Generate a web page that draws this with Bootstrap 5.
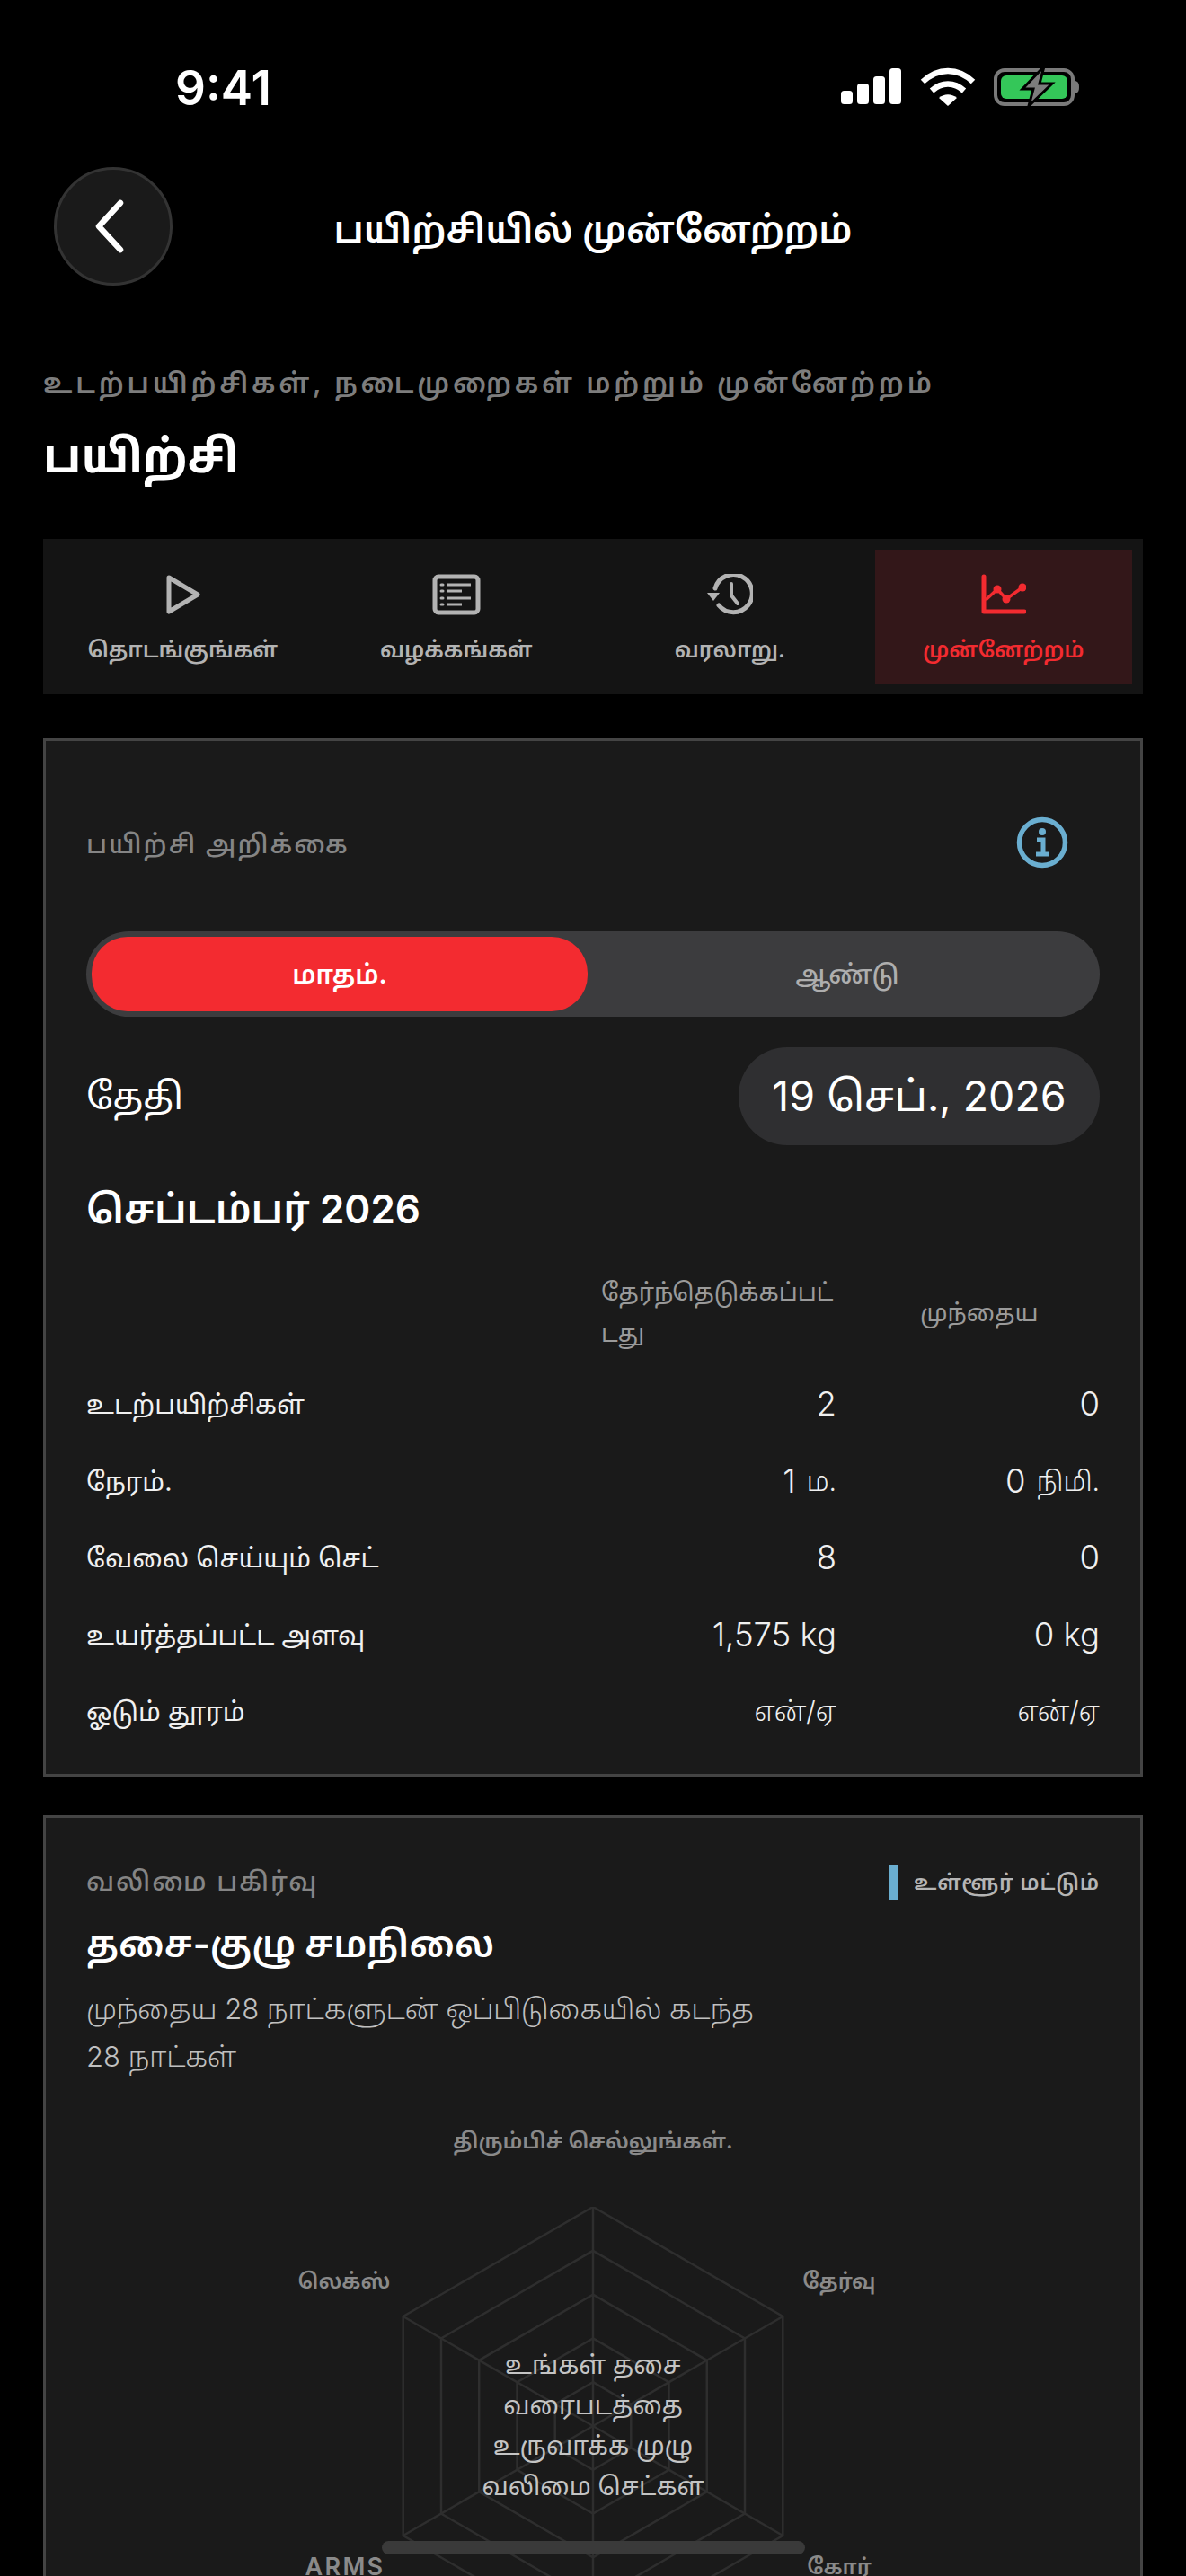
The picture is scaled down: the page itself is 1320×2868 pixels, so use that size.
<!DOCTYPE html>
<html lang="ta">
<head>
  <meta charset="UTF-8">
  <title>பயிற்சியில் முன்னேற்றம்</title>
  <link href="https://cdn.jsdelivr.net/npm/bootstrap@5.3.0/dist/css/bootstrap.min.css" rel="stylesheet">
  <style>
    html, body { height: 2868px; overflow: hidden; }
    body { background: #000; color: #fff; font-family: Inter, "Noto Sans", "Noto Sans Tamil", sans-serif; position: relative; }
    .status-row { height: 60px; margin-top: 68px; padding: 0 118px 0 195px; }
    .status-row svg { margin-bottom: 4px; }
    .clock { font-size: 53px; font-weight: 600; line-height: 60px; }
    .top-bar { height: 132px; margin-top: 58px; padding: 0 60px; }
    .back-btn { width: 132px; height: 132px; background: #1a1a1a; border: 3px solid #333; border-radius: 50%; }
    .back-btn svg { margin-right: 8px; }
    .top-title { font-size: 41px; font-weight: 600; line-height: 60px; padding-top: 6px; }
    .spacer-btn { width: 132px; }
    .page-head { padding: 84px 48px 0; }
    .eyebrow { font-size: 30px; font-weight: 600; letter-spacing: 3.8px; color: #7d7d7d; line-height: 48px; }
    .page-title { font-size: 51px; font-weight: 700; line-height: 84px; margin: 16px 0 0; }
    .tab-bar { margin: 50px 48px 0; height: 173px; padding: 12px; gap: 18px; background: #141414; }
    .tab-item { flex: 1 1 0; color: #b3b3b3; }
    .tab-item svg { display: block; margin: 27px auto 0; }
    .tab-item span { display: block; font-size: 24.5px; font-weight: 600; line-height: 40px; margin-top: 18px; }
    .tab-on { background: #331719; color: #f32b30; }
    .panel { margin: 49px 48px 0; background: #1a1a1a; border: 3px solid #444; padding: 0 45px; }
    .panel-one { height: 1156px; }
    .panel-two { margin-top: 43px; height: 900px; position: relative; }
    .panel-label { font-size: 29px; font-weight: 500; letter-spacing: 2px; color: #858585; line-height: 48px; }
    .info-ico { margin-right: 35px; margin-bottom: 4px; }
    .seg { height: 95px; margin-top: 66px; background: #3c3c3e; border-radius: 48px; padding: 6px; }
    .seg-on, .seg-off { border-radius: 40px; line-height: 84px; text-align: center; }
    .seg-on { flex: 0 0 552px; background: #f32b30; color: #fff; font-weight: 600; font-size: 29px; }
    .seg-off { flex: 1 1 0; padding-left: 14px; color: #aeaeae; font-weight: 500; font-size: 28.5px; }
    .date-row { margin-top: 34px; }
    .date-label { font-size: 41px; }
    .date-pill { background: #2f2f31; border-radius: 54px; height: 109px; width: 402px; font-size: 46.5px; font-weight: 400; }
    .month-title { font-size: 44px; font-weight: 600; line-height: 60px; margin: 41px 0 0; }
    .stat-grid { display: grid; grid-template-columns: 573px 262px 293px; margin-top: 27px; }
    .stat-head { font-size: 27px; color: #9a9a9a; line-height: 46px; white-space: nowrap; min-height: 118px; display: flex; align-items: center; }
    .stat-head-r { padding-left: 93px; }
    .stat-cell { height: 85.5px; display: flex; align-items: center; font-size: 29px; color: #f0f0f0; }
    .stat-num { justify-content: flex-end; font-size: 36.5px; font-weight: 300; }
    .stat-unit { font-size: 30px; margin-left: 12px; }
    .stat-na { font-size: 30px; }
    .tag-local { border-left: 9px solid #6aaed0; padding-left: 18px; height: 39px; font-size: 23.5px; font-weight: 600; letter-spacing: 0.8px; color: #b5b5b5; line-height: 39px; }
    .sec-title { font-size: 41px; font-weight: 600; line-height: 60px; margin: 15px 0 0; }
    .sec-desc { font-size: 31px; font-weight: 300; color: #c0c0c0; line-height: 53px; width: 780px; margin: 16px 0 0; }
    .radar-box { position: relative; height: 620px; margin-top: 33px; }
    .radar-box svg { position: absolute; left: 0; top: 108px; }
    .radar-lbl { position: absolute; transform: translate(-50%, -50%); font-size: 24px; font-weight: 600; color: #8a8a8a; white-space: nowrap; }
    .radar-lbl-en { font-size: 27px; letter-spacing: 2.3px; line-height: 20px; }
    .radar-note { position: absolute; left: 50%; top: 262px; transform: translateX(-50%); width: 300px; text-align: center; font-size: 28px; line-height: 45px; color: #c4c4c4; }
    .home-bar { position: absolute; left: 425px; top: 2829px; width: 471px; height: 15px; border-radius: 8px; background: #3a3a3a; }
  </style>
</head>
<body>

  <div class="status-row d-flex justify-content-between align-items-center">
    <div class="clock">9:41</div>
    <svg width="268" height="44" viewBox="0 0 268 44">
      <g fill="#fff">
        <rect x="2" y="27" width="13" height="15" rx="3.5"/>
        <rect x="20" y="19" width="13" height="23" rx="3.5"/>
        <rect x="38" y="11" width="13" height="31" rx="3.5"/>
        <rect x="56" y="2" width="13" height="40" rx="3.5"/>
      </g>
      <g fill="none" stroke="#fff" stroke-width="6.5">
        <path d="M93 17 C 110 1, 132 1, 149 17"/>
        <path d="M103 27 C 114 17, 128 17, 139 27"/>
      </g>
      <path d="M111 35 C 117 30, 125 30, 131 35 L121 44 Z" fill="#fff"/>
      <rect x="174" y="4" width="86" height="38" rx="10" fill="none" stroke="#7a7a7a" stroke-width="4"/>
      <rect x="180" y="10" width="74" height="26" rx="6" fill="#34c759"/>
      <path d="M263 16 c3 1 4 3 4 7 s-1 6 -4 7 z" fill="#7a7a7a"/>
      <path d="M228 0 L204 25 H216 L211 44 L237 19 H223 Z" fill="#7d7d7d" stroke="#000" stroke-width="3"/>
    </svg>
  </div>

  <div class="top-bar d-flex align-items-center">
    <div class="back-btn d-flex align-items-center justify-content-center flex-shrink-0">
      <svg width="40" height="60" viewBox="0 0 40 60"><path d="M32 4 L8 30 L32 56" fill="none" stroke="#fff" stroke-width="6.5" stroke-linecap="round" stroke-linejoin="round"/></svg>
    </div>
    <div class="top-title flex-grow-1 text-center">பயிற்சியில் முன்னேற்றம்</div>
    <div class="spacer-btn flex-shrink-0"></div>
  </div>

  <div class="page-head">
    <div class="eyebrow">உடற்பயிற்சிகள், நடைமுறைகள் மற்றும் முன்னேற்றம்</div>
    <h1 class="page-title">பயிற்சி</h1>
  </div>

  <div class="tab-bar d-flex">
    <div class="tab-item text-center">
      <svg width="48" height="46" viewBox="0 0 48 46"><path d="M9 4 L41 23 L9 42 Z" fill="none" stroke="currentColor" stroke-width="5" stroke-linejoin="round"/></svg>
      <span>தொடங்குங்கள்</span>
    </div>
    <div class="tab-item text-center">
      <svg width="54" height="46" viewBox="0 0 54 46">
        <rect x="3" y="3" width="48" height="40" rx="4" fill="none" stroke="currentColor" stroke-width="5"/>
        <path d="M17 12 H43 M17 19 H33 M17 27 H43 M17 34 H33" stroke="currentColor" stroke-width="3"/>
        <path d="M10 12 h2 M10 19 h2 M10 27 h2 M10 34 h2" stroke="currentColor" stroke-width="3" stroke-linecap="round"/>
      </svg>
      <span>வழக்கங்கள்</span>
    </div>
    <div class="tab-item text-center">
      <svg width="52" height="46" viewBox="0 0 52 46">
        <path d="M10 16 A 21 21 0 1 1 14 35" fill="none" stroke="currentColor" stroke-width="5" stroke-linecap="round"/>
        <path d="M1 21 L15 21 L8 30 Z" fill="currentColor"/>
        <path d="M28 11 V24 L35 33" fill="none" stroke="currentColor" stroke-width="4" stroke-linecap="round"/>
      </svg>
      <span>வரலாறு.</span>
    </div>
    <div class="tab-item tab-on text-center">
      <svg width="50" height="46" viewBox="0 0 50 46">
        <path d="M3 3 V42 H48" fill="none" stroke="currentColor" stroke-width="5" stroke-linecap="round" stroke-linejoin="round"/>
        <path d="M5 29 L18 17 L28 28 L46 15" fill="none" stroke="currentColor" stroke-width="3.5"/>
        <circle cx="18" cy="17" r="4.5" fill="currentColor"/><circle cx="28" cy="28" r="4.5" fill="currentColor"/><circle cx="46" cy="15" r="4.5" fill="currentColor"/>
      </svg>
      <span>முன்னேற்றம்</span>
    </div>
  </div>

  <div class="panel panel-one">
    <div class="d-flex justify-content-between align-items-center" style="padding-top:84px">
      <div class="panel-label">பயிற்சி அறிக்கை</div>
      <svg class="info-ico" width="58" height="58" viewBox="0 0 58 58">
        <circle cx="29" cy="29" r="25.5" fill="none" stroke="#6aaed0" stroke-width="5.5"/>
        <circle cx="29" cy="17" r="4" fill="#6aaed0"/>
        <path d="M23 26 H30 V41 M22 42 H37" fill="none" stroke="#6aaed0" stroke-width="5"/>
      </svg>
    </div>
    <div class="seg d-flex">
      <div class="seg-on">மாதம்.</div>
      <div class="seg-off">ஆண்டு</div>
    </div>
    <div class="date-row d-flex justify-content-between align-items-center">
      <div class="date-label">தேதி</div>
      <div class="date-pill d-flex align-items-center justify-content-center">19 செப்., 2026</div>
    </div>
    <h2 class="month-title">செப்டம்பர் 2026</h2>
    <div class="stat-grid">
      <div class="stat-head"></div>
      <div class="stat-head"><span>தேர்ந்தெடுக்கப்பட்<br>டது</span></div>
      <div class="stat-head stat-head-r">முந்தைய</div>

      <div class="stat-cell">உடற்பயிற்சிகள்</div>
      <div class="stat-cell stat-num">2</div>
      <div class="stat-cell stat-num">0</div>

      <div class="stat-cell">நேரம்.</div>
      <div class="stat-cell stat-num">1<span class="stat-unit">ம.</span></div>
      <div class="stat-cell stat-num">0<span class="stat-unit">நிமி.</span></div>

      <div class="stat-cell">வேலை செய்யும் செட்</div>
      <div class="stat-cell stat-num">8</div>
      <div class="stat-cell stat-num">0</div>

      <div class="stat-cell">உயர்த்தப்பட்ட அளவு</div>
      <div class="stat-cell stat-num">1,575 kg</div>
      <div class="stat-cell stat-num">0 kg</div>

      <div class="stat-cell">ஓடும் தூரம்</div>
      <div class="stat-cell stat-num stat-na">என்/ஏ</div>
      <div class="stat-cell stat-num stat-na">என்/ஏ</div>
    </div>
  </div>

  <div class="panel panel-two">
    <div class="d-flex justify-content-between align-items-center" style="padding-top:47px">
      <div class="panel-label">வலிமை பகிர்வு</div>
      <div class="tag-local">உள்ளூர் மட்டும்</div>
    </div>
    <h2 class="sec-title">தசை-குழு சமநிலை</h2>
    <p class="sec-desc">முந்தைய 28 நாட்களுடன் ஒப்பிடுகையில் கடந்த 28 நாட்கள்</p>
    <div class="radar-box" id="radarBox">
      <svg id="radarSvg" width="1128" height="520" viewBox="0 0 1128 520"></svg>
      <div class="radar-lbl" style="left:564px;top:35px">திரும்பிச் செல்லுங்கள்.</div>
      <div class="radar-lbl" style="left:287px;top:191px">லெக்ஸ்</div>
      <div class="radar-lbl" style="left:838px;top:191px">தேர்வு</div>
      <div class="radar-lbl radar-lbl-en" style="left:288px;top:509px">ARMS</div>
      <div class="radar-lbl" style="left:838px;top:509px">கோர்</div>
      <div class="radar-note">உங்கள் தசை வரைபடத்தை உருவாக்க முழு வலிமை செட்கள்</div>
    </div>
  </div>

  <div class="home-bar"></div>

  <script src="https://cdn.jsdelivr.net/npm/bootstrap@5.3.0/dist/js/bootstrap.bundle.min.js"></script>
  <script>
    // radar grid: 5 rings + 6 spokes
    const svg = document.getElementById('radarSvg');
    const cx = 564, cy = 244, rings = [244, 195.2, 146.4, 97.6, 48.8];
    let out = '';
    rings.forEach(r => {
      const pts = [];
      for (let i = 0; i < 6; i++) {
        const a = Math.PI / 3 * i - Math.PI / 2;
        pts.push((cx + r * Math.cos(a)).toFixed(1) + ',' + (cy + r * Math.sin(a)).toFixed(1));
      }
      out += `<polygon points="${pts.join(' ')}" fill="none" stroke="#2e2e2e" stroke-width="2.5"/>`;
    });
    for (let i = 0; i < 6; i++) {
      const a = Math.PI / 3 * i - Math.PI / 2;
      out += `<line x1="${cx}" y1="${cy}" x2="${cx + 244 * Math.cos(a)}" y2="${cy + 244 * Math.sin(a)}" stroke="#2e2e2e" stroke-width="2.5"/>`;
    }
    svg.innerHTML = out;
  </script>
</body>
</html>
